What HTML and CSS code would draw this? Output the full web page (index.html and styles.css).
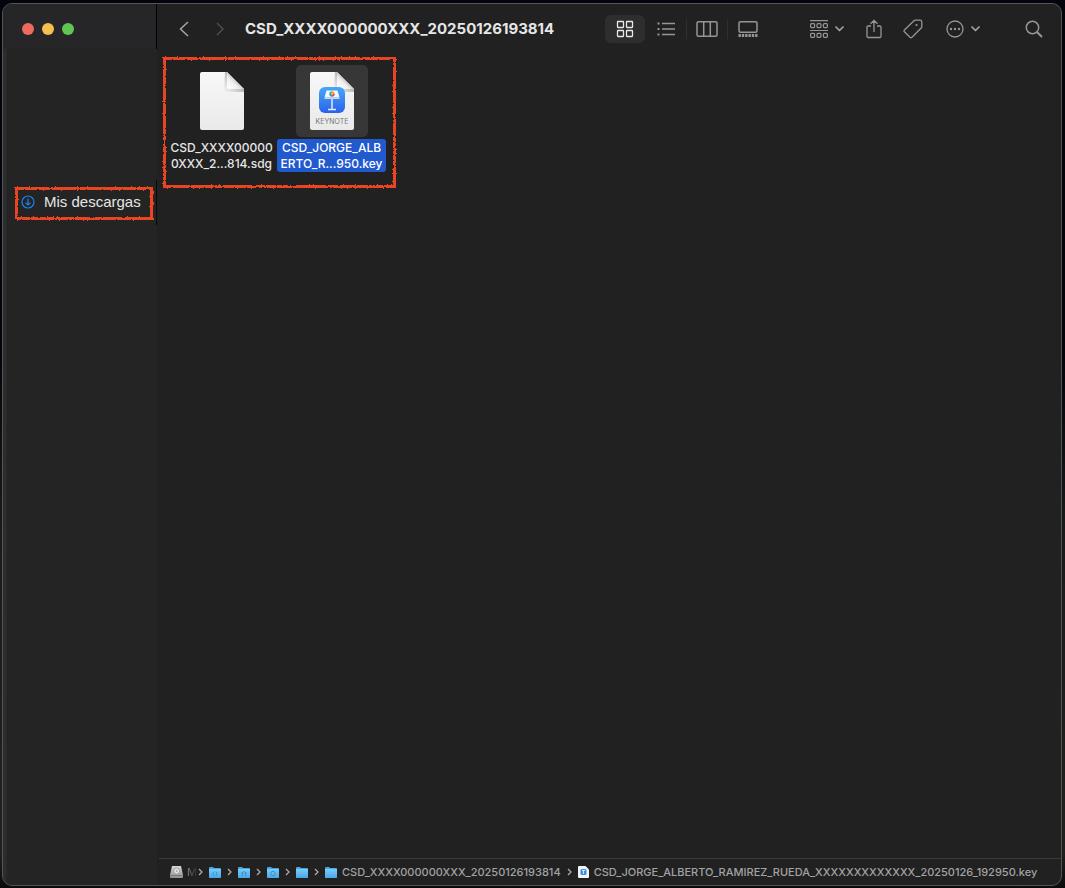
FILE: index.html
```html
<!DOCTYPE html>
<html lang="es">
<head>
<meta charset="utf-8">
<title>CSD_XXXX000000XXX_20250126193814</title>
<link rel="stylesheet" href="styles.css">
</head>
<body>
<svg class="defs" width="0" height="0" aria-hidden="true">
  <filter id="crayon" x="-5%" y="-10%" width="110%" height="120%">
    <feTurbulence type="fractalNoise" baseFrequency="0.5" numOctaves="2" seed="4" result="n"/>
    <feDisplacementMap in="SourceGraphic" in2="n" scale="3" xChannelSelector="R" yChannelSelector="G"/>
  </filter>
  <linearGradient id="paper" x1="0" y1="0" x2="0" y2="1"><stop offset="0" stop-color="#f8f8f8"/><stop offset="1" stop-color="#e9e9e9"/></linearGradient>
  <linearGradient id="fold" x1="0" y1="1" x2="1" y2="0"><stop offset="0" stop-color="#fff"/><stop offset=".35" stop-color="#f0f0f0"/><stop offset=".55" stop-color="#c4c4c4"/></linearGradient>
  <linearGradient id="shade" x1="1" y1="0" x2="0" y2="1"><stop offset=".3" stop-color="#777" stop-opacity=".7"/><stop offset="1" stop-color="#aaa" stop-opacity="0"/></linearGradient>
  <linearGradient id="blue" x1="0" y1="0" x2="0" y2="1"><stop offset="0" stop-color="#46a7fa"/><stop offset="1" stop-color="#2b62ea"/></linearGradient>
  <linearGradient id="sky" x1="0" y1="0" x2="0" y2="1"><stop offset="0" stop-color="#7accfa"/><stop offset="1" stop-color="#48a7e8"/></linearGradient>
  <linearGradient id="metal" x1="0" y1="0" x2="0" y2="1"><stop offset="0" stop-color="#d5d8d9"/><stop offset="1" stop-color="#8d9193"/></linearGradient>
  <symbol id="sheet" viewBox="0 0 44 58">
    <path d="M2 0H27L44 17V56Q44 58 42 58H2Q0 58 0 56V2Q0 0 2 0Z" fill="url(#paper)"/>
    <path d="M25 0H27L44 17V20H27Q24 20 24 17Z" fill="url(#shade)"/>
    <path d="M27 0L44 17H29Q27 17 27 15Z" fill="url(#fold)"/>
  </symbol>
  <symbol id="folder" viewBox="0 0 12 11">
    <path d="M0 1Q0 0 1 0H4L5 1H11Q12 1 12 2V10Q12 11 11 11H1Q0 11 0 10Z" fill="#4aa5dc"/>
    <path d="M0 2H12V10Q12 11 11 11H1Q0 11 0 10Z" fill="url(#sky)"/>
  </symbol>
  <symbol id="next" viewBox="0 0 5 8"><path d="M1 1L4 4L1 7" fill="none" stroke="#b0b0b0" stroke-width="1.2"/></symbol>
  <symbol id="down" viewBox="0 0 9 6"><path d="M1 1L4.500 4.500L8 1" fill="none" stroke="#a0a0a0" stroke-width="1.700" stroke-linecap="round" stroke-linejoin="round"/></symbol>
</svg>
<div class="window">
  <aside class="sidebar">
    <div class="lights">
      <button class="light close" aria-label="Cerrar"></button>
      <button class="light minimize" aria-label="Minimizar"></button>
      <button class="light expand" aria-label="Ampliar"></button>
    </div>
    <div class="place-row">
      <a class="place marked" href="#">
        <svg width="14" height="14" viewBox="0 0 14 14" fill="none" stroke="#1c80ee" stroke-width="1.200"><circle cx="7" cy="7" r="6"/><path d="M7 3.500V10M4.500 7.600L7 10L9.500 7.600"/></svg>
        <span>Mis descargas</span>
      </a>
    </div>
  </aside>
  <main class="main">
    <header class="toolbar">
      <button class="tool" aria-label="Atrás"><svg width="10" height="16" viewBox="0 0 10 16" fill="none" stroke="#a6a6a6" stroke-width="1.500"><path d="M9 1L1.500 8L9 15"/></svg></button>
      <button class="tool" aria-label="Adelante"><svg width="8" height="14" viewBox="0 0 8 14" fill="none" stroke="#505050" stroke-width="1.300"><path d="M1 1L7 7L1 13"/></svg></button>
      <h1 class="title">CSD_XXXX000000XXX_20250126193814</h1>
      <div class="views">
        <button class="view active" aria-label="Iconos"><svg width="18" height="18" viewBox="0 0 18 18" fill="none" stroke="#e8e8e8" stroke-width="1.300"><rect x="1.500" y="1.500" width="6" height="6" rx=".5"/><rect x="10.500" y="1.500" width="6" height="6" rx=".5"/><rect x="1.500" y="10.500" width="6" height="6" rx=".5"/><rect x="10.500" y="10.500" width="6" height="6" rx=".5"/></svg></button>
        <button class="view" aria-label="Lista"><svg width="18" height="14" viewBox="0 0 18 14" fill="none" stroke="#969696" stroke-width="1.300"><path d="M5 1.500H18M5 7H18M5 12.500H18"/><path d="M.5 1.500H2.500M.5 7H2.500M.5 12.500H2.500" stroke-width="2"/></svg></button>
        <button class="view split" aria-label="Columnas"><svg width="22" height="16" viewBox="0 0 22 16" fill="none" stroke="#969696" stroke-width="1.500"><rect x="1" y=".8" width="20" height="14.400" rx="1.500"/><path d="M7.700 1V15M14.300 1V15"/></svg></button>
        <button class="view split" aria-label="Galería"><svg width="20" height="16" viewBox="0 0 20 16" fill="none" stroke="#969696" stroke-width="1.500"><rect x="1" y=".8" width="18" height="10.400" rx="1.500"/><path d="M.5 14.500H19.500" stroke-width="3" stroke-dasharray="2.400 .92"/></svg></button>
      </div>
      <button class="tool group" aria-label="Agrupar"><svg width="18" height="18" viewBox="0 0 18 18" fill="none" stroke="#969696" stroke-width="1.200"><path d="M0 .6H18M0 10.500H18"/><rect x=".6" y="3.600" width="4" height="4" rx="1"/><rect x="7" y="3.600" width="4" height="4" rx="1"/><rect x="13.400" y="3.600" width="4" height="4" rx="1"/><rect x=".6" y="13.300" width="4" height="4" rx="1"/><rect x="7" y="13.300" width="4" height="4" rx="1"/><rect x="13.400" y="13.300" width="4" height="4" rx="1"/></svg><svg width="9" height="6"><use href="#down"/></svg></button>
      <button class="tool share" aria-label="Compartir"><svg width="16" height="20" viewBox="0 0 16 20" fill="none" stroke="#969696" stroke-width="1.300"><path d="M5 7H2.200Q1 7 1 8.200V17.300Q1 18.500 2.200 18.500H13.800Q15 18.500 15 17.300V8.200Q15 7 13.800 7H11M8 13V1.500M4.500 4.800L8 1.500L11.500 4.800"/></svg></button>
      <button class="tool tag" aria-label="Etiquetas"><svg width="20" height="20" viewBox="0 0 20 20" fill="none" stroke="#969696" stroke-width="1.300" stroke-linejoin="round"><path d="M11 1.800Q11.600 1.200 12.500 1.200H17Q18.800 1.200 18.800 3V7.500Q18.800 8.400 18.200 9L9 18.300Q8 19.200 7 18.300L1.400 12.700Q.6 11.800 1.400 11Z"/><circle cx="13.500" cy="6" r="1.100" fill="#969696" stroke="none"/></svg></button>
      <button class="tool more" aria-label="Más acciones"><svg width="18" height="18" viewBox="0 0 18 18" fill="none" stroke="#969696" stroke-width="1.300"><circle cx="9" cy="9" r="8"/><g fill="#969696" stroke="none"><circle cx="5" cy="9" r="1.200"/><circle cx="9" cy="9" r="1.200"/><circle cx="13" cy="9" r="1.200"/></g></svg><svg width="9" height="6"><use href="#down"/></svg></button>
      <button class="tool search" aria-label="Buscar"><svg width="18" height="18" viewBox="0 0 18 18" fill="none" stroke="#969696" stroke-width="1.500"><circle cx="7.500" cy="7.500" r="6.200"/><path d="M12 12L17 17" stroke-width="2"/></svg></button>
    </header>
    <section class="content">
      <div class="files marked">
        <button class="file">
          <span class="thumb"><svg width="44" height="58"><use href="#sheet"/></svg></span>
          <span class="name">CSD_XXXX00000<br>0XXX_2...814.sdg</span>
        </button>
        <button class="file selected">
          <span class="thumb"><svg width="44" height="58" viewBox="0 0 44 58"><use href="#sheet"/>
            <rect x="9" y="15" width="26" height="26" rx="6" fill="url(#blue)"/>
            <path d="M21.200 26H22.800V37H21.200Z" fill="#d9e5f4"/><path d="M18 36.800H26V38.200H18Z" fill="#e4edf8"/>
            <path d="M16.500 18.500H27.500L29.500 25.500H14.500Z" fill="#f3f6fa"/><path d="M14.500 25.500H29.500V27H14.500Z" fill="#cfd9e6"/>
            <g fill="none" stroke-width="2"><path d="M20.200 22A1.800 1.800 0 0 1 22 20.200" stroke="#58b947"/><path d="M22 20.200A1.800 1.800 0 0 1 23.800 22" stroke="#f3a51e"/><path d="M23.800 22A1.800 1.800 0 0 1 22 23.800" stroke="#dc4a4a"/><path d="M22 23.800A1.800 1.800 0 0 1 20.200 22" stroke="#3592e8"/></g>
            <text class="kind" x="22" y="52" text-anchor="middle">KEYNOTE</text></svg></span>
          <span class="name">CSD_JORGE_ALB<br>ERTO_R...950.key</span>
        </button>
      </div>
    </section>
    <nav class="path" aria-label="Ruta">
      <a class="crumb disk" href="#"><svg width="13" height="12" viewBox="0 0 13 12"><path d="M2 0H11L13 9V11Q13 12 12 12H1Q0 12 0 11V9Z" fill="url(#metal)"/><path d="M.5 9.500H12.500" stroke="#777"/><circle cx="6.700" cy="5" r="3" fill="#e2e2e2" stroke="#a0a4a6"/><circle cx="6.700" cy="5" r=".8" fill="#888"/></svg><span class="faded">M</span></a>
      <svg width="5" height="8"><use href="#next"/></svg>
      <a class="crumb" href="#" aria-label="Usuarios"><svg width="12" height="11" viewBox="0 0 12 11"><use href="#folder"/><path d="M5 4.500Q3 6.500 5 8.500M7 4.500Q9 6.500 7 8.500" fill="none" stroke="#3a93cc"/></svg></a>
      <svg width="5" height="8"><use href="#next"/></svg>
      <a class="crumb" href="#" aria-label="Inicio"><svg width="12" height="11" viewBox="0 0 12 11"><use href="#folder"/><path d="M3 6.500L6 4.500L9 6.500M4.500 6V9M7.500 6V9" fill="none" stroke="#3a93cc"/></svg></a>
      <svg width="5" height="8"><use href="#next"/></svg>
      <a class="crumb" href="#" aria-label="Descargas"><svg width="12" height="11" viewBox="0 0 12 11"><use href="#folder"/><circle cx="6" cy="6.500" r="2.200" fill="none" stroke="#3a93cc"/></svg></a>
      <svg width="5" height="8"><use href="#next"/></svg>
      <a class="crumb" href="#" aria-label="Carpeta"><svg width="12" height="11"><use href="#folder"/></svg></a>
      <svg width="5" height="8"><use href="#next"/></svg>
      <a class="crumb" href="#"><svg width="12" height="11"><use href="#folder"/></svg><span>CSD_XXXX000000XXX_20250126193814</span></a>
      <svg width="5" height="8"><use href="#next"/></svg>
      <a class="crumb" href="#"><svg width="11" height="12" viewBox="0 0 11 12"><path d="M1 0H7.500L11 3.500V11Q11 12 10 12H1Q0 12 0 11V1Q0 0 1 0Z" fill="#f3f3f3"/><rect x="2.500" y="3" width="6" height="6" rx="1.500" fill="#3c8cf0"/><path d="M4 4.500H7M5.500 5V8" stroke="#d9e8fa"/></svg><span>CSD_JORGE_ALBERTO_RAMIREZ_RUEDA_XXXXXXXXXXXXX_20250126_192950.key</span></a>
    </nav>
  </main>
</div>
</body>
</html>
```
FILE: styles.css
```css
* { box-sizing: border-box; }
body {
  margin: 0;
  min-height: 100vh;
  padding: 3px 3px 2px 2px;
  display: flex;
  background: linear-gradient(#03050d 0, #03050d 40%, #1a1b1a 60%, #20211f 96%, #0b0b0b 100%);
  font-family: Inter, "Liberation Sans", sans-serif;
  color: #e6e6e6;
}
button { margin: 0; padding: 0; border: 0; background: none; color: inherit; font: inherit; }
a { color: inherit; text-decoration: none; }
svg { display: block; flex: none; }
.defs { position: absolute; }
.window {
  flex: 1;
  min-width: 0;
  display: grid;
  grid-template-columns: 154px minmax(0, 1fr);
  border: 1px solid #545454;
  border-radius: 10px;
  overflow: hidden;
  background: #212121;
}
.sidebar { background: linear-gradient(90deg, #2c2d2d 0, #2c2d2d 3px, #242424 4px); }
.lights {
  display: flex;
  align-items: center;
  gap: 8px;
  height: 45px;
  padding: 4px 0 0 19px;
  border-right: 1px solid #000;
  background: #262628;
}
.light { width: 12px; height: 12px; border-radius: 50%; }
.close { background: #ed6a5e; }
.minimize { background: #f5bf4f; }
.expand { background: #61c554; }
.place-row { margin-top: 131px; padding: 7px 3px 5px 12px; border-right: 1px solid #0a0a0a; }
.place {
  display: flex;
  align-items: center;
  gap: 9px;
  height: 33px;
  padding: 0 6px 4px;
  font-family: "Liberation Sans", Arial, sans-serif;
  font-size: 15px;
  line-height: 18px;
  white-space: nowrap;
}
.marked { position: relative; }
.marked::after {
  content: "";
  position: absolute;
  inset: 0;
  border: 3px solid #ea4420;
  filter: url(#crayon);
  pointer-events: none;
}
.main { display: flex; flex-direction: column; min-width: 0; }
.toolbar { display: flex; align-items: center; height: 49px; padding: 0 9px; }
.tool { display: flex; align-items: center; justify-content: center; gap: 7px; width: 36px; height: 28px; }
.title { flex: 1; min-width: 0; margin: 0 0 0 7px; font-size: 15px; line-height: 20px; font-weight: 700; }
.views { display: flex; gap: 1px; }
.view { position: relative; display: flex; align-items: center; justify-content: center; width: 40px; height: 28px; border-radius: 6px; }
.active { background: #2e2e2e; }
.split::before { content: ""; position: absolute; left: -1px; top: 4px; width: 1px; height: 20px; background: #303030; }
.group { margin-left: 41px; }
.share { margin-left: 11px; }
.tag { margin-left: 3px; }
.more { margin-left: 14px; }
.search { margin-left: 35px; }
.content { flex: 1; padding: 4px 6px; }
.files { display: inline-flex; gap: 1px; width: 233px; height: 131px; padding: 8px 4px; }
.file { display: flex; flex-direction: column; align-items: center; gap: 2px; width: 109px; }
.thumb { display: flex; align-items: center; justify-content: center; width: 72px; height: 72px; border-radius: 5px; }
.name { padding: 1px 4px 0; border-radius: 3px; font-size: 12px; line-height: 16px; font-weight: 500; white-space: nowrap; text-align: center; }
.selected .thumb { background: #373737; }
.selected .name { background: #2159ce; color: #fff; }
.kind { font-family: Inter, sans-serif; font-size: 7px; fill: #777; }
.path {
  display: flex;
  align-items: center;
  gap: 6px;
  height: 27px;
  margin-left: 2px;
  padding: 0 11px;
  border-top: 1px solid #393939;
  font-size: 11px;
  line-height: 14px;
  font-weight: 500;
  color: #a3a3a3;
  white-space: nowrap;
}
.crumb { display: flex; align-items: center; gap: 5px; }
.disk { gap: 4px; margin-right: -5px; }
.faded { color: transparent; background: linear-gradient(90deg, #777, #2a2a2a); background-clip: text; }
```
